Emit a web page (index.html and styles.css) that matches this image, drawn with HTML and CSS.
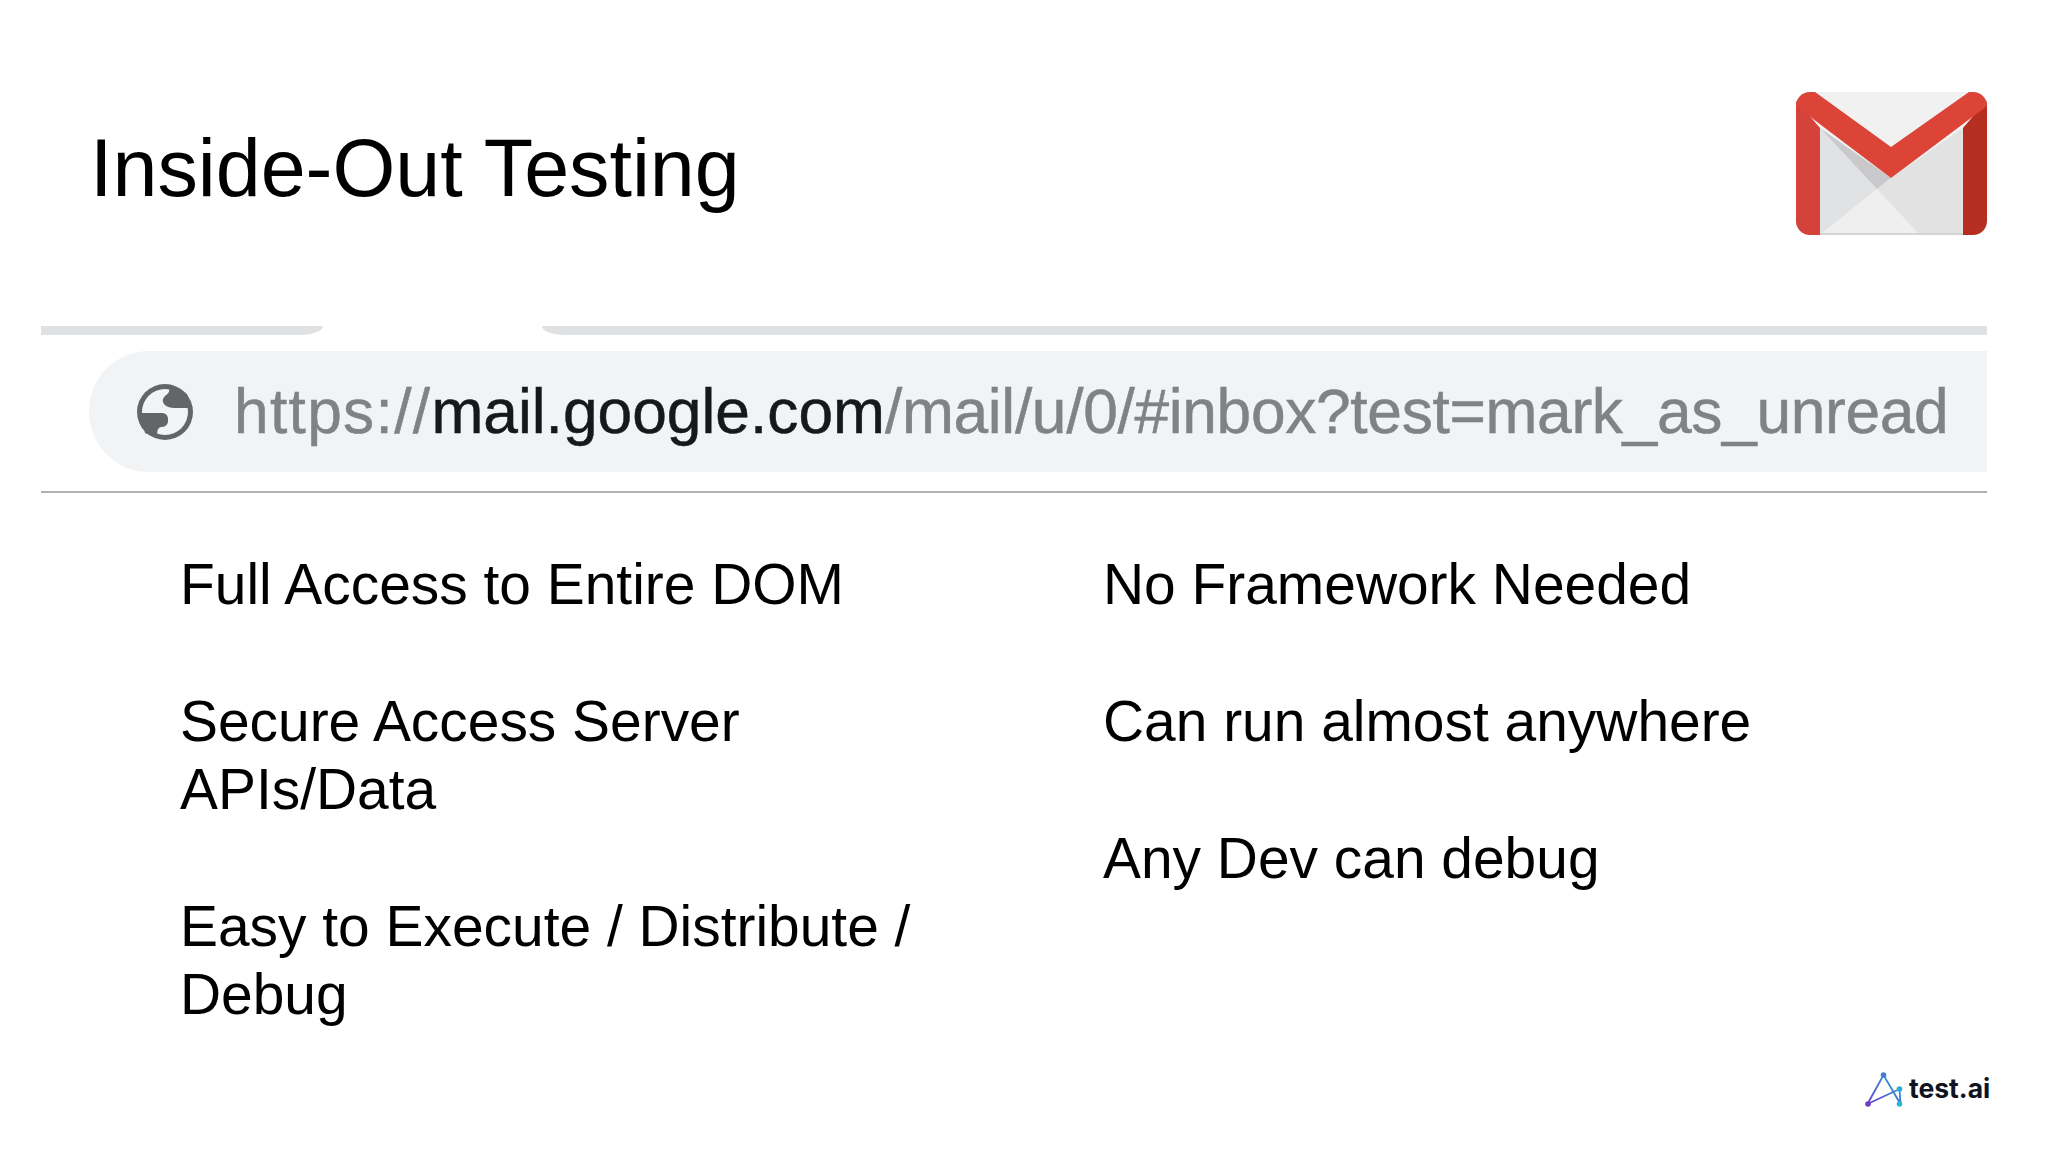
FILE: index.html
```html
<!DOCTYPE html>
<html lang="en">
<head>
<meta charset="utf-8">
<title>Inside-Out Testing</title>
<link rel="stylesheet" href="styles.css">
</head>
<body>
<main class="slide">
  <header class="head">
    <h1 class="title">Inside-Out Testing</h1>
    <svg class="gmail" viewBox="0 0 191 143" aria-label="Gmail logo">
      <defs>
        <clipPath id="env"><rect width="191" height="143" rx="14"/></clipPath>
      </defs>
      <g clip-path="url(#env)">
        <rect width="191" height="143" fill="#f1f1f1"/>
        <polygon points="24,36 81,97 24,143" fill="#e1e2e4"/>
        <polygon points="24,36 95,86 81,97" fill="#c9c9cb"/>
        <polygon points="81,97 124,143 26,143" fill="#efefef"/>
        <polygon points="95,86 167,36 167,143 124,143 81,97" fill="#e2e2e2"/>
        <rect x="24" y="141" width="143" height="2" fill="#d4d4d4"/>
        <polygon points="0,8 24,36 24,143 0,143" fill="#d4433a"/>
        <polygon points="191,8 167,36 167,143 191,143" fill="#b62e20"/>
        <polygon points="0,0 19,0 95,55 173,0 191,0 191,14 95,86 0,14" fill="#db4437"/>
      </g>
    </svg>
  </header>

  <section class="browser">
    <div class="tabstrip">
      <span class="strip strip-left"></span>
      <span class="strip strip-right"></span>
    </div>
    <div class="bar">
      <svg class="globe" viewBox="0 0 56 56" aria-hidden="true">
        <circle cx="28" cy="28" r="28" fill="#636569"/>
        <circle cx="28" cy="28" r="23" fill="#f2f3f5"/>
        <path d="M4 29H26Q32 30 31 38Q30 43 24 43Q20 44 20 50V54L8 49Z" fill="#636569"/>
        <path d="M32 3Q34 8 28 12Q24 16 27 20Q30 24 38 24H54L50 10Z" fill="#636569"/>
      </svg>
      <p class="url"><span class="dim scheme">https://</span><span class="host">mail.google.com</span><span class="dim path">/mail/u/0/#inbox?test=mark_as_unread</span></p>
    </div>
    <div class="rule"></div>
  </section>

  <section class="columns">
    <ul class="points points-left">
      <li>Full Access to Entire DOM</li>
      <li>Secure Access Server APIs/Data</li>
      <li>Easy to Execute / Distribute / Debug</li>
    </ul>
    <ul class="points">
      <li>No Framework Needed</li>
      <li>Can run almost anywhere</li>
      <li>Any Dev can debug</li>
    </ul>
  </section>

  <footer class="brand">
    <svg class="brand-mark" viewBox="0 0 40 40" aria-hidden="true">
      <defs>
        <linearGradient id="mark" x1="0" y1="1" x2="1" y2="0">
          <stop offset="0" stop-color="#6a3fc4"/>
          <stop offset="0.5" stop-color="#3f6fd0"/>
          <stop offset="1" stop-color="#2cb6d8"/>
        </linearGradient>
      </defs>
      <path d="M3 35 19 6 36 35 35 20 3 35" fill="none" stroke="url(#mark)" stroke-width="1.8"/>
      <circle cx="3.5" cy="35" r="2.8" fill="#6a3fc4"/>
      <circle cx="19" cy="6" r="2.8" fill="#4a7bd4"/>
      <circle cx="35" cy="20" r="2.8" fill="#2fa9d6"/>
      <circle cx="35" cy="35" r="2.8" fill="#2cb6d8"/>
    </svg>
    <span class="brand-name">test.ai</span>
  </footer>
</main>
</body>
</html>
```

FILE: styles.css
```css
* { box-sizing: border-box; }

html, body {
  margin: 0;
  padding: 0;
  background: #fff;
}

.slide {
  width: 2048px;
  height: 1152px;
  padding: 92px 61px 0 41px;
  display: flex;
  flex-direction: column;
  font-family: "Liberation Sans", Arial, sans-serif;
  color: #000;
  overflow: hidden;
}

.head {
  display: flex;
  justify-content: space-between;
  align-items: flex-start;
  height: 143px;
  padding-left: 49px;
}

.title {
  margin: 32px 0 0;
  font-size: 80.8px;
  line-height: 88px;
  font-weight: 400;
}

.gmail {
  width: 191px;
  height: 143px;
  flex: none;
}

.browser {
  margin-top: 91px;
}

.tabstrip {
  display: flex;
  justify-content: space-between;
  height: 9px;
}

.strip { height: 9px; background: #e0e1e3; }
.strip-left { width: 282px; border-bottom-right-radius: 22px 9px; }
.strip-right { width: 1445px; border-bottom-left-radius: 22px 9px; }

.bar {
  margin: 16px 0 0 48px;
  height: 121px;
  display: flex;
  align-items: center;
  gap: 41px;
  padding-left: 48px;
  background: #f2f3f5;
  border-radius: 60px 0 0 60px;
  overflow: hidden;
}

.globe {
  width: 56px;
  height: 56px;
  flex: none;
}

.url {
  margin: 0;
  font-size: 62.3px;
  line-height: 72px;
  white-space: nowrap;
  -webkit-text-stroke: 0.5px currentColor;
}

.dim { color: #808286; }
.scheme { letter-spacing: 1.3px; }
.path { letter-spacing: -0.33px; }
.host { color: #17181b; }

.rule {
  margin-top: 19px;
  height: 2px;
  background: #b0b1b3;
}

.columns {
  margin-top: 57px;
  display: grid;
  grid-template-columns: 923px 1fr;
  padding-left: 139px;
}

.points {
  margin: 0;
  padding: 0;
  list-style: none;
  font-size: 56.9px;
  line-height: 68px;
  display: flex;
  flex-direction: column;
  gap: 69px;
}

.points-left { padding-right: 170px; }

.brand {
  position: absolute;
  left: 1864px;
  top: 1069px;
  display: flex;
  align-items: center;
  gap: 4px;
}

.brand-mark {
  width: 41px;
  height: 40px;
  flex: none;
}

.brand-name {
  font-family: Inter, "Liberation Sans", sans-serif;
  font-weight: 700;
  font-size: 26.5px;
  line-height: 34px;
  color: #10141f;
  margin-top: -3px;
}
```
